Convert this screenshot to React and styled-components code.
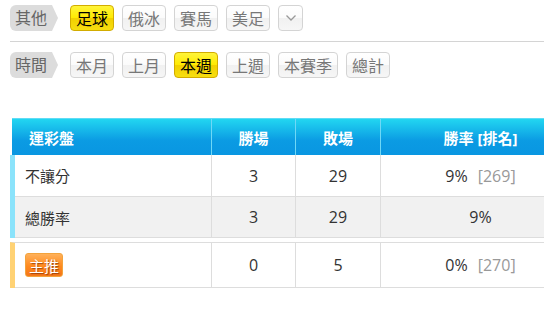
import React from 'react';
import styled, { createGlobalStyle } from 'styled-components';

const GlobalStyle = createGlobalStyle`
    body {
        margin: 0;
        background: #fff;
        font-family: "Open Sans", "Noto Sans CJK TC", sans-serif;
        overflow: hidden;
    }
`;

const sports = [
    { name: '足球', active: true },
    { name: '俄冰' },
    { name: '賽馬' },
    { name: '美足' },
];

const periods = [
    { name: '本月' },
    { name: '上月' },
    { name: '本週', active: true },
    { name: '上週' },
    { name: '本賽季' },
    { name: '總計' },
];

const rows = [
    { name: '不讓分', win: 3, lose: 29, rate: '9%', rank: '[269]' },
    { name: '總勝率', win: 3, lose: 29, rate: '9%', shaded: true },
];

export default function App() {
    return (
        <Page>
            <GlobalStyle />
            <FilterRow>
                <FilterLabel>其他</FilterLabel>
                {sports.map(s => (
                    <FilterButton key={s.name} $active={s.active}>{s.name}</FilterButton>
                ))}
                <FilterButton $narrow>
                    <svg width="12" height="8" viewBox="0 0 12 8">
                        <path d="M1.5 1.5 L6 6 L10.5 1.5" fill="none" stroke="#999" strokeWidth="1.3" />
                    </svg>
                </FilterButton>
            </FilterRow>
            <Divider />
            <FilterRow>
                <FilterLabel>時間</FilterLabel>
                {periods.map(p => (
                    <FilterButton key={p.name} $active={p.active}>{p.name}</FilterButton>
                ))}
            </FilterRow>

            <Table>
                <HeadRow>
                    <HeadCell $left>運彩盤</HeadCell>
                    <HeadCell>勝場</HeadCell>
                    <HeadCell>敗場</HeadCell>
                    <HeadCell>勝率 [排名]</HeadCell>
                </HeadRow>
                <Group $bar="#8be3fb">
                    {rows.map(r => (
                        <BodyRow key={r.name} $shaded={r.shaded} $h={r.shaded ? 41 : 42}>
                            <Cell $left>{r.name}</Cell>
                            <Cell>{r.win}</Cell>
                            <Cell>{r.lose}</Cell>
                            <Cell>
                                {r.rate}
                                {r.rank && <Rank>{r.rank}</Rank>}
                            </Cell>
                        </BodyRow>
                    ))}
                </Group>
                <Group $bar="#ffd274" $gap>
                    <BodyRow $h={45}>
                        <Cell $left><Tag>主推</Tag></Cell>
                        <Cell>0</Cell>
                        <Cell>5</Cell>
                        <Cell>0%<Rank>[270]</Rank></Cell>
                    </BodyRow>
                </Group>
            </Table>
        </Page>
    );
}

const Page = styled.div`
    width: 544px;
    height: 311px;
    overflow: hidden;
    padding-top: 5px;
    box-sizing: border-box;
`;

const FilterRow = styled.div`
    display: flex;
    align-items: center;
    gap: 8px;
    padding-left: 10px;
    height: 26px;
`;

const FilterLabel = styled.div`
    position: relative;
    height: 26px;
    line-height: 26px;
    width: 42px;
    margin-right: 10px;
    padding-left: 5px;
    box-sizing: border-box;
    background: #dcdcdc;
    border-radius: 6px 0 0 6px;
    color: #666;
    font-size: 16px;
    &::after {
        content: '';
        position: absolute;
        right: -6px;
        top: 0;
        border-top: 13px solid transparent;
        border-bottom: 13px solid transparent;
        border-left: 6px solid #dcdcdc;
    }
`;

const FilterButton = styled.div`
    height: 26px;
    box-sizing: border-box;
    padding: 0 ${p => (p.$narrow ? '0' : '5px')};
    width: ${p => (p.$narrow ? '25px' : 'auto')};
    display: flex;
    align-items: center;
    justify-content: center;
    font-size: 16px;
    border-radius: 4px;
    border: 1px solid ${p => (p.$active ? '#d2ac00' : '#d4d4d4')};
    background: ${p => (p.$active
        ? 'linear-gradient(#fff43a 0%, #ffea00 50%, #f2d000 51%, #f7de10 100%)'
        : 'linear-gradient(#ffffff 0%, #fbfbfb 50%, #f1f1f1 51%, #f6f6f6 100%)')};
    color: ${p => (p.$active ? '#000' : '#777')};
`;

const Divider = styled.div`
    height: 1px;
    background: #d4d4d4;
    margin: 10px 0 10px 10px;
`;

const Table = styled.div`
    margin-top: 40px;
    padding-left: 10px;
    font-size: 16px;
    color: #333;
`;

const HeadRow = styled.div`
    display: grid;
    grid-template-columns: 200px 84px 85px 200px;
    margin-left: 2px;
    height: 37px;
    box-sizing: border-box;
    border-top: 1px solid #5fdcf5;
    background: linear-gradient(#22d6f1, #0b9be3 60%, #0996e1);
    color: #fff;
    font-size: 15px;
    font-weight: bold;
`;

const HeadCell = styled.div`
    display: flex;
    align-items: center;
    justify-content: ${p => (p.$left ? 'flex-start' : 'center')};
    padding-left: ${p => (p.$left ? '17px' : '0')};
    border-right: 1px solid #6fd8f6;
`;

const Group = styled.div`
    border-left: 5px solid ${p => p.$bar};
    margin-top: ${p => (p.$gap ? '4px' : '0')};
    border-top: ${p => (p.$gap ? '1px solid #ddd' : 'none')};
`;

const BodyRow = styled.div`
    display: grid;
    grid-template-columns: 197px 84px 85px 200px;
    height: ${p => p.$h}px;
    box-sizing: border-box;
    border-bottom: 1px solid #ddd;
    background: ${p => (p.$shaded ? '#f1f1f1' : '#fff')};
`;

const Cell = styled.div`
    display: flex;
    align-items: center;
    justify-content: ${p => (p.$left ? 'flex-start' : 'center')};
    padding-left: ${p => (p.$left ? '10px' : '0')};
    font-size: ${p => (p.$left ? '15px' : '16px')};
    border-right: 1px solid #ddd;
`;

const Rank = styled.span`
    color: #999;
    margin-left: 10px;
`;

const Tag = styled.span`
    display: inline-flex;
    align-items: center;
    justify-content: center;
    width: 38px;
    height: 24px;
    box-sizing: border-box;
    border: 1px solid #f3a33c;
    border-radius: 3px;
    background: linear-gradient(#ffb15a, #ff8a1e 55%, #f4761a);
    color: #fff;
    font-size: 15px;
    text-shadow: 1px 1px 1px rgba(120, 40, 0, 0.7);
`;
